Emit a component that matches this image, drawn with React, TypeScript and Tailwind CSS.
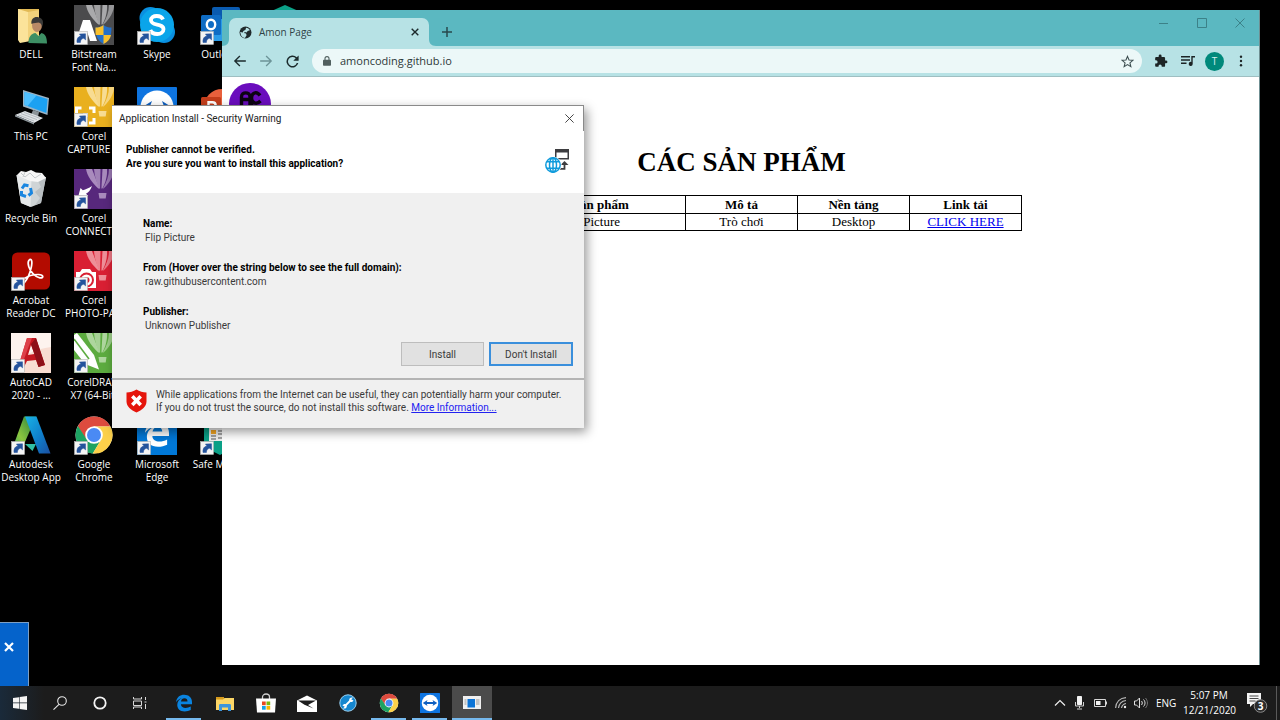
import type { ReactNode } from "react";

function ShortcutArrow() {
  return (
    <g>
      <rect x="0.5" y="26.5" width="13" height="13" fill="#f4f4f4" stroke="#b5b5b5" strokeWidth="0.6" />
      <path d="M3 37.5c-.4-3.6 1-6.3 4-6.6l-1.6-1.8 6.1-.3.1 6.1-1.8-1.6c-2.6.4-3.3 1.9-3.4 4.2z" fill="#24539c" stroke="#24539c" strokeWidth=".5" />
    </g>
  );
}

function Glyph({ children, shortcut = true }: { children: ReactNode; shortcut?: boolean }) {
  return (
    <svg viewBox="0 0 40 40" className="size-10 shrink-0" aria-hidden="true">
      {children}
      {shortcut && <ShortcutArrow />}
    </svg>
  );
}

function Balloon({ tint }: { tint: string }) {
  return (
    <g fill={tint}>
      <path d="M12 0h6l7.5 19.500h-1.200C18.500 14 13.500 8 12 0z" />
      <path d="M20 0h6.500l-.4 19.500h-.9C22.500 14 20.500 7 20 0z" opacity=".9" />
      <path d="M28.500 0H33c.5 7-1.500 14-4.600 19.500h-1z" />
      <path d="M35 0h5v2c-1.500 8-6 13.500-10.500 17.500h-.7C32.500 13 35 7 35 0z" opacity=".8" />
      <path d="M24.500 24h8l-.8 5.500h-6.300z" />
    </g>
  );
}

function FolderUser() {
  return (
    <Glyph shortcut={false}>
      <path d="M7 4h21v30l-20 3z" fill="#e2ba55" />
      <path d="M7 4l10 3v29.500L9 38 7 35z" fill="#fbe39a" />
      <path d="M17 7l11-2v29l-11 2.500z" fill="#f2d27c" />
      <path d="M17.500 38c0-6 2.500-9.500 7-10l3 3 3-3c3.500.8 5.500 4 5.500 10.500z" fill="#3d8f64" />
      <ellipse cx="26" cy="20" rx="5" ry="7" fill="#b98a66" />
      <path d="M20.500 19c-1-6 4-8 7.500-6.500 4 .8 5 5 3 9.500-.5-3-1.500-4-3.500-4.500-2 .4-4.500.2-7 1.500z" fill="#3b3a38" />
    </Glyph>
  );
}

function Computer() {
  return (
    <Glyph shortcut={false}>
      <path d="M12 3l26 8-1.500 17L12 19.500z" fill="#9bb3c4" />
      <path d="M13.500 5l23 7-1.200 14L13.500 18z" fill="#1ba1f2" />
      <path d="M13.500 5l12 3.600-9 10.500-3-1z" fill="#4fc0ff" />
      <path d="M22 23l6 2-1 5-7-2z" fill="#8c9499" />
      <path d="M4 28l10-4 18 7-9 5z" fill="#dfe3e6" />
      <path d="M4 28l19 8v1.500L4 29.500z" fill="#8e979d" />
      <path d="M7 27.800l16 6.200M10 26.600l16 6M13 25.400l16 6" stroke="#a3abb0" strokeWidth=".7" />
    </Glyph>
  );
}

function Bin() {
  return (
    <Glyph shortcut={false}>
      <path d="M5.500 6L35 8l-5 26-10 4-10-4z" fill="#cfd4d6" />
      <path d="M5.500 6l15 4-1 28-9.500-4z" fill="#e6e9ea" />
      <path d="M35 8l-8 4 3 6-6 5 5 6-5 7 6-2z" fill="#b9bfc2" />
      <path d="M6 6l4-4 5 1 5-2 5 2.500 6 .5 4 5-8 4-8-1z" fill="#f6f6f6" />
      <path d="M10 4l4 4 5-4 5 5 6-4M14 3l-2 5" stroke="#c4c9cb" fill="none" />
      <g fill="none" stroke="#1a86e0" strokeWidth="3">
        <path d="M11 19.500l2.500-3.500 4 .8" />
        <path d="M19.500 19l1 5-3 2.500" />
        <path d="M15 27.500l-4.500-1.500V22" />
      </g>
    </Glyph>
  );
}

function Acrobat() {
  return (
    <Glyph>
      <rect x="1" y="1.500" width="38" height="37" rx="5.500" fill="#b30b00" />
      <path d="M17.800 9.500c2.600-3 4 .5 2.300 7.500-1.500 6.500-4.500 12-6.600 14.500-3 2.500-4.500-1-.5-3.800 4-2.700 9.500-4.300 14.500-4.200 5.500.3 5.500 4 1.300 3.300-4.500-.8-9.500-6-11-11-.9-3-.9-5 0-6.300z" fill="none" stroke="#fff" strokeWidth="1.700" />
    </Glyph>
  );
}

function Autocad() {
  return (
    <Glyph>
      <rect width="40" height="40" fill="#f8ddd2" />
      <path d="M0 0h40v14C24 16 12 22 0 34z" fill="#fdf3ee" />
      <path fillRule="evenodd" d="M16 5h9l9 27-6.500 2-2.500-7-9 1-3.500 7H7zM20 12l-3 10 6.500-1z" fill="#c4171f" />
      <path d="M25 5l9 27-6.500 2L20 11z" fill="#8d1018" />
      <path d="M16 5h5L10 34H7z" fill="#dd4048" />
    </Glyph>
  );
}

function Autodesk() {
  return (
    <Glyph>
      <defs>
        <linearGradient id="adskLeft" x1="1" x2="0" y1="0" y2="1">
          <stop stopColor="#1f7a3c" />
          <stop offset=".6" stopColor="#8cc63f" />
          <stop offset="1" stopColor="#27a06a" />
        </linearGradient>
        <linearGradient id="adskRight" x1="0" x2="1" y1="0" y2="1">
          <stop stopColor="#19b3e6" />
          <stop offset=".55" stopColor="#0f7fcb" />
          <stop offset="1" stopColor="#1b4fa0" />
        </linearGradient>
      </defs>
      <path d="M13 1.500h12L9 38.500H1v-4z" fill="url(#adskLeft)" />
      <path d="M14 29l11 0-3.500 7z" fill="#2fbfa4" />
      <path d="M14 1.500h11.500L39.500 38.500H28z" fill="url(#adskRight)" />
    </Glyph>
  );
}

function Bitstream() {
  return (
    <Glyph>
      <rect width="40" height="40" fill="#4b4b4d" />
      <path d="M9 15h7l7 21h-7l-2.500-8H10l-4 8H2z" fill="#fff" />
      <Balloon tint="#a9a9ab" />
      <path d="M29.500 20c2.500 2 5 2.500 8 2.500 0 8-2 13-8 16.500-6-3.500-8-8.500-8-16.500 3 0 5.500-.5 8-2.500z" fill="#2470c9" />
      <path d="M29.500 20v10h-7.800c-.2-2-.2-5-.2-7.500 3 0 5.500-.5 8-2.500zM29.500 30h7.600c-.9 4-3.300 7-7.600 9z" fill="#f9c02c" />
    </Glyph>
  );
}

function Capture() {
  return (
    <Glyph>
      <rect width="40" height="40" fill="#e9b01f" />
      <Balloon tint="#f7dc93" />
      <path d="M2.500 26v-5h5M15 21h5v5M20 31v5h-5" stroke="#fff" strokeWidth="3" fill="none" />
      <rect x="9" y="26" width="5" height="4" fill="#fff" />
    </Glyph>
  );
}

function Connect() {
  return (
    <Glyph>
      <rect width="40" height="40" fill="#57287c" />
      <Balloon tint="#a98bbd" />
      <path d="M4.500 26.500l2-7.500 2.300 2.200c3.200-.8 6-2.200 9.200-4.200-1.500 4-3.500 6.500-6 7.700l2.300 2.300z" fill="#fff" />
    </Glyph>
  );
}

function PhotoPaint() {
  return (
    <Glyph>
      <rect width="40" height="40" fill="#d91f33" />
      <Balloon tint="#ee8f98" />
      <path d="M2 21h4l2-3h8l2 3h4v16H2z" fill="#fff" />
      <circle cx="12.500" cy="29" r="6.500" fill="none" stroke="#d91f33" strokeWidth="2" />
      <circle cx="12.500" cy="29" r="3" fill="#d91f33" />
    </Glyph>
  );
}

function CorelDraw() {
  return (
    <Glyph>
      <rect width="40" height="40" fill="#5cab3f" />
      <Balloon tint="#aed69e" />
      <path d="M0 2l3-2 17 22 5 14.500L11 31 0 17z" fill="#fff" />
      <path d="M0 6l15 20" stroke="#5cab3f" strokeWidth="1.600" />
    </Glyph>
  );
}

function ChromeMark() {
  return (
    <g>
      <circle cx="20" cy="20" r="18.500" fill="#fff" />
      <path d="M20 11.500h16.400A18.500 18.500 0 0 0 3.600 11.500L12.200 24.500z" fill="#dd4b3e" />
      <path d="M3.900 11A18.500 18.500 0 0 0 18.800 38.500l8.300-13.800-14.500-.5z" fill="#1da362" />
      <path d="M20 11.500h16.400A18.500 18.500 0 0 1 18.800 38.500l8.500-14.200z" fill="#fcd04a" />
      <circle cx="20" cy="20" r="8.800" fill="#fff" />
      <circle cx="20" cy="20" r="7" fill="#4a8af4" />
    </g>
  );
}

function TeamViewerMark() {
  return (
    <g>
      <rect width="40" height="40" rx="1" fill="#0e74e0" />
      <circle cx="20" cy="20" r="16.500" fill="#fff" />
      <path d="M5.500 20l9.500-6-1.500 4h13L25 14l9.500 6-9.500 6 1.500-4h-13l1.500 4z" fill="#0e5fc0" />
    </g>
  );
}

function EdgeMark({ color }: { color: string }) {
  return (
    <path
      fill={color}
      d="M4 18.300C5.200 8.500 12 3.500 20.500 3.500c8.700 0 15.500 5.500 15.500 15v4.200H13.800c.2 5.300 4.700 7.300 9.200 7.300 4 0 7-.9 10.500-2.800v7c-3.500 1.700-7.500 2.800-12.200 2.800C12 37 6.500 31.500 6.500 24c0-6.500 3.700-11.300 9.300-13.500C10.500 11.500 6.700 14.300 4 18.300zM14 16.800h13c0-3.800-2.300-6.100-6-6.100-3.800 0-6.300 2.400-7 6.100z"
    />
  );
}

function Skype() {
  return (
    <Glyph>
      <circle cx="13.500" cy="13" r="11" fill="#0a8fe0" />
      <circle cx="27" cy="27" r="11" fill="#0a8fe0" />
      <circle cx="20" cy="20" r="17" fill="#0aa5ea" />
      <path d="M26 14.500c-1-2.500-3.500-3.500-6.300-3.500-3.200 0-5.700 1.600-5.700 4.300 0 6.200 12.500 2.500 12.500 9 0 3-2.800 4.700-6.200 4.700-3.300 0-6-1.200-7-4" stroke="#fff" strokeWidth="3.800" fill="none" />
    </Glyph>
  );
}

function Outlook() {
  return (
    <Glyph>
      <rect x="12" y="2" width="28" height="34" rx="2" fill="#0a5bb0" />
      <rect x="12" y="14" width="28" height="22" fill="#2a9be8" />
      <rect x="1" y="10" width="20" height="20" rx="1.500" fill="#0f6cc4" />
      <ellipse cx="11" cy="19.500" rx="4.200" ry="4.800" fill="none" stroke="#fff" strokeWidth="2.400" />
    </Glyph>
  );
}

function PowerPoint() {
  return (
    <Glyph>
      <circle cx="22" cy="20" r="18" fill="#e8603c" />
      <rect x="1" y="10" width="20" height="20" rx="1.500" fill="#c43e1c" />
      <path d="M8.500 26V15.300h3.800c4.500 0 4.500 6.200 0 6.200H8.500" fill="none" stroke="#fff" strokeWidth="2.400" />
    </Glyph>
  );
}

function SafeMoney() {
  return (
    <Glyph>
      <path d="M20 0l18 8v22L20 40 4 32V8z" fill="#0ba087" />
      <rect x="9" y="6" width="26" height="20" fill="#eee" />
      <rect x="11" y="15" width="5" height="4" fill="#f5a623" />
      <path d="M11 21h5M18 16h8M18 19h8M11 24h5M18 23h8" stroke="#555" strokeWidth="1.200" />
    </Glyph>
  );
}

type Shortcut = { lines: string[]; icon: ReactNode } | null;

const shortcutColumns: Shortcut[][] = [
  [
    { lines: ["DELL"], icon: <FolderUser /> },
    { lines: ["This PC"], icon: <Computer /> },
    { lines: ["Recycle Bin"], icon: <Bin /> },
    { lines: ["Acrobat", "Reader DC"], icon: <Acrobat /> },
    { lines: ["AutoCAD", "2020 - ..."], icon: <Autocad /> },
    { lines: ["Autodesk", "Desktop App"], icon: <Autodesk /> },
  ],
  [
    { lines: ["Bitstream", "Font Na..."], icon: <Bitstream /> },
    { lines: ["Corel", "CAPTURE ..."], icon: <Capture /> },
    { lines: ["Corel", "CONNECT ..."], icon: <Connect /> },
    { lines: ["Corel", "PHOTO-PA..."], icon: <PhotoPaint /> },
    { lines: ["CorelDRAW", "X7 (64-Bit)"], icon: <CorelDraw /> },
    { lines: ["Google", "Chrome"], icon: <Glyph><ChromeMark /></Glyph> },
  ],
  [
    { lines: ["Skype"], icon: <Skype /> },
    { lines: ["TeamViewer"], icon: <Glyph><TeamViewerMark /></Glyph> },
    null,
    null,
    null,
    {
      lines: ["Microsoft", "Edge"],
      icon: (
        <Glyph>
          <rect width="40" height="40" fill="#0078d7" />
          <g transform="translate(5 4) scale(.75)"><EdgeMark color="#fff" /></g>
        </Glyph>
      ),
    },
  ],
  [
    { lines: ["Outlook"], icon: <Outlook /> },
    { lines: ["PowerPoint"], icon: <PowerPoint /> },
    null,
    null,
    null,
    { lines: ["Safe Money"], icon: <SafeMoney /> },
  ],
  [{ lines: [], icon: <Glyph><path d="M22 0l18 8v20L22 40 4 32V8z" fill="#0ba087" /></Glyph> }],
];

function DesktopIcons() {
  return (
    <div className="flex gap-px text-[10px] leading-[13px] text-white">
      {shortcutColumns.map((column, c) => (
        <ul key={c} className="w-[62px] shrink-0">
          {column.map((item, r) => (
            <li key={r} className="flex h-[82px] flex-col items-center gap-[3px] pt-[5px] text-center whitespace-nowrap">
              {item?.icon}
              <span className="flex flex-col items-center">
                {item?.lines.map((line) => <span key={line}>{line}</span>)}
              </span>
            </li>
          ))}
        </ul>
      ))}
    </div>
  );
}

function TabStrip() {
  return (
    <header className="flex h-9 items-start justify-between bg-[#5bb8c1]">
      <div className="flex items-end self-end">
        <svg viewBox="0 0 7 7" className="size-[7px]" aria-hidden="true">
          <path d="M0 7h7V0c0 4-2 7-7 7z" fill="#b7e2e5" />
        </svg>
        <div className="flex h-7 w-[200px] items-center rounded-t-[7px] bg-[#b7e2e5] pr-2 pl-[10px]">
          <svg viewBox="0 0 24 24" className="size-[13px]" aria-hidden="true">
            <circle cx="12" cy="12" r="11" fill="#202a2c" />
            <path d="M13 3c3 0 6 2 7 5l-4 1-2 3-3-1-2 2 4 1 1 3-3 5c-5 0-8-4-8-8l-1-3 5 1 1-3 4-2z" fill="#b7e2e5" />
          </svg>
          <span className="ml-[7px] flex-1 text-[10px] text-[#2f4346]">Amon Page</span>
          <button aria-label="Close tab" className="flex size-3 items-center justify-center">
            <svg viewBox="0 0 8 8" className="size-2" stroke="#1d2a2c" strokeWidth="1.400">
              <path d="M.7.7l6.600 6.600M7.300.7L.7 7.300" />
            </svg>
          </button>
        </div>
        <svg viewBox="0 0 7 7" className="size-[7px]" aria-hidden="true">
          <path d="M7 7H0V0c0 4 2 7 7 7z" fill="#b7e2e5" />
        </svg>
        <button aria-label="New tab" className="mb-[7px] ml-1 flex size-[14px] items-center justify-center">
          <svg viewBox="0 0 10 10" className="size-[10px]" stroke="#29484c" strokeWidth="1.500">
            <path d="M5 0v10M0 5h10" />
          </svg>
        </button>
      </div>
      <div className="flex h-[26px] items-center gap-7 pr-[14px]">
        <button aria-label="Minimize">
          <svg viewBox="0 0 10 10" className="block size-[10px]" stroke="#3c8188"><path d="M0 5.500h9" /></svg>
        </button>
        <button aria-label="Maximize">
          <svg viewBox="0 0 10 10" className="block size-[10px]" stroke="#3c8188" fill="none"><path d="M.5.500h9v9h-9z" /></svg>
        </button>
        <button aria-label="Close">
          <svg viewBox="0 0 10 10" className="block size-[10px]" stroke="#3c8188"><path d="M.5.500l9 9M9.500.500l-9 9" /></svg>
        </button>
      </div>
    </header>
  );
}

function Toolbar() {
  return (
    <nav className="flex h-[31px] items-center border-b border-[#9fbfc2] bg-[#b7e2e5] pr-4 pl-[11px]">
      <div className="flex items-center gap-3">
        <button aria-label="Back">
          <svg viewBox="0 0 24 24" className="block size-[14px]" fill="#1c2b2d"><path d="M22 10.800H6.100l6.500-6.500L11 2.500 1.500 12l9.500 9.500 1.600-1.700-6.500-6.600H22z" /></svg>
        </button>
        <button aria-label="Forward">
          <svg viewBox="0 0 24 24" className="block size-[14px]" fill="#6d9498"><path d="M2 10.900h15.900l-6.500-6.600L13 2.500 22.500 12 13 21.500l-1.600-1.700 6.500-6.600H2z" /></svg>
        </button>
        <button aria-label="Reload">
          <svg viewBox="0 0 24 24" className="block size-[15px]" fill="#1c2b2d"><path d="M18.800 5.200A9.600 9.600 0 1 0 21.300 14.500h-2.500a7.200 7.200 0 1 1-1.700-7.600L13.300 10.700H21.800V2.200z" /></svg>
        </button>
      </div>
      <div className="ml-3 flex h-6 flex-1 items-center rounded-full bg-[#ecf8f8] pr-2 pl-[11px]">
        <svg viewBox="0 0 8 10" className="h-[10px] w-2" aria-hidden="true">
          <rect x="0" y="3.800" width="8" height="6" rx=".8" fill="#51605f" />
          <path d="M2 4V2.600a2 2 0 0 1 4 0V4" stroke="#51605f" fill="none" strokeWidth="1.100" />
        </svg>
        <input aria-label="Address" defaultValue="amoncoding.github.io" className="ml-[9px] min-w-0 flex-1 bg-transparent text-[11px] text-[#2e3838] outline-none" />
        <button aria-label="Bookmark this page">
          <svg viewBox="0 0 24 24" className="block size-[13px]" fill="none" stroke="#3d4e50" strokeWidth="2"><path d="M12 2.500l2.800 6.700 7.200.6-5.500 4.700 1.700 7L12 17.700l-6.200 3.800 1.700-7L2 9.800l7.200-.6z" /></svg>
        </button>
      </div>
      <div className="ml-3 flex items-center">
        <button aria-label="Extensions">
          <svg viewBox="0 0 24 24" className="block size-[14px]" fill="#1d2526"><path d="M20.500 11H19V7a2 2 0 0 0-2-2h-4V3.500a2.500 2.500 0 0 0-5 0V5H4a2 2 0 0 0-2 2v3.800h1.500a2.700 2.700 0 0 1 0 5.400H2V20c0 1.100.9 2 2 2h3.800v-1.500a2.700 2.700 0 0 1 5.400 0V22H17a2 2 0 0 0 2-2v-4h1.500a2.500 2.500 0 0 0 0-5z" /></svg>
        </button>
        <button aria-label="Media controls" className="ml-[13px]">
          <svg viewBox="0 0 14 12" className="block h-3 w-[14px]" fill="#1d2526">
            <path d="M0 1h9v1.400H0zM0 4.300h9v1.400H0zM0 7.600h5.500V9H0zM10.300 1H14v1.500h-2.300V9a2 2 0 1 1-1.400-2z" />
          </svg>
        </button>
        <button aria-label="Account" className="ml-[10px] size-[19px] rounded-full bg-[#00897b] text-[10px] leading-[19px] text-[#d6efec]">T</button>
        <button aria-label="Menu" className="ml-[15px]">
          <svg viewBox="0 0 4 12" className="block h-3 w-1" fill="#1d2526"><circle cx="2" cy="1.800" r="1.200" /><circle cx="2" cy="6" r="1.200" /><circle cx="2" cy="10.200" r="1.200" /></svg>
        </button>
      </div>
    </nav>
  );
}

function ProductPage() {
  return (
    <main className="flex-1 bg-white pt-[6px] pr-[5px] pl-[7px] font-['Liberation_Serif',serif] text-black">
      <svg viewBox="0 0 42 42" className="block size-[42px]" aria-hidden="true">
        <circle cx="21" cy="21" r="21" fill="#6a0dbd" />
        <path d="M12.500 24V14c0-5.500 8.500-5.500 8.500 0v10M12.500 16.500H21M31 12.500c-3.500-5-8.500-2.500-8.500 2.500s5 7 9 3M22.500 18v7" fill="none" stroke="#0c0312" strokeWidth="3.400" />
      </svg>
      <h1 className="mt-[21px] text-center text-[27px] leading-8 font-bold">CÁC SẢN PHẨM</h1>
      <table className="mx-auto mt-[17px] w-[561px] table-fixed border-collapse text-center text-[13px] leading-[15px] [&_td]:border [&_td]:border-black [&_td]:px-px [&_td]:pb-px [&_th]:border [&_th]:border-black [&_th]:p-px">
        <colgroup>
          <col className="w-8" />
          <col className="w-48" />
          <col className="w-28" />
          <col className="w-28" />
          <col className="w-28" />
        </colgroup>
        <thead>
          <tr><th></th><th>Tên sản phẩm</th><th>Mô tả</th><th>Nền tảng</th><th>Link tải</th></tr>
        </thead>
        <tbody>
          <tr>
            <td></td>
            <td>Flip Picture</td>
            <td>Trò chơi</td>
            <td>Desktop</td>
            <td><a href="#download" className="text-[#0000ee] underline">CLICK HERE</a></td>
          </tr>
        </tbody>
      </table>
    </main>
  );
}

function Browser() {
  return (
    <section aria-label="Amon Page" className="absolute top-[10px] right-5 bottom-[21px] left-[222px] flex flex-col overflow-hidden border-r border-[#6f8f92]">
      <TabStrip />
      <Toolbar />
      <ProductPage />
    </section>
  );
}

const details = [
  { term: "Name:", value: "Flip Picture" },
  { term: "From (Hover over the string below to see the full domain):", value: "raw.githubusercontent.com" },
  { term: "Publisher:", value: "Unknown Publisher" },
];

function InstallDialog() {
  return (
    <section role="dialog" aria-labelledby="dialog-title" className="absolute top-[105px] left-28 w-[472px] border-t border-[#8a8a8a] bg-[#f0f0f0] font-[Roboto,sans-serif] text-[10px] text-[#3a3a3a] shadow-[3px_4px_10px_rgba(0,0,0,0.4)]">
      <header className="bg-white">
        <div className="flex h-[25px] items-center justify-between border-r border-[#8a8a8a] pr-[9px] pl-[7px]">
          <h2 id="dialog-title" className="text-[#222]">Application Install - Security Warning</h2>
          <button aria-label="Close">
            <svg viewBox="0 0 9 9" className="block size-[9px]" stroke="#333" strokeWidth=".9"><path d="M.4.400l8.200 8.200M8.600.400L.4 8.600" /></svg>
          </button>
        </div>
        <div className="flex h-[62px] items-start justify-between pt-3 pr-[15px] pl-[14px]">
          <p className="leading-[14px] font-bold text-black">
            Publisher cannot be verified.
            <br />
            Are you sure you want to install this application?
          </p>
          <svg viewBox="0 0 24 24" className="mt-[6px] size-6" aria-hidden="true">
            <path d="M10 0h14v10.500H10zM11.500 3.500V9h11V3.500z" fill="#3d3d40" fillRule="evenodd" />
            <path d="M13.500 19.800h6v-5.800" fill="none" stroke="#3d3d40" strokeWidth="1.800" />
            <path d="M15.500 16l4-4 4 4z" fill="#3d3d40" />
            <circle cx="8" cy="16" r="8.600" fill="#fff" />
            <g fill="none" stroke="#0f9bdc" strokeWidth="1.500">
              <circle cx="8" cy="16" r="7.200" />
              <ellipse cx="8" cy="16" rx="3.500" ry="7.200" />
              <path d="M8 9v14M2 12.800h12M2 19.200h12" />
            </g>
          </svg>
        </div>
      </header>
      <div className="border-b-2 border-[#b4b4b4] px-[11px] pt-6 pb-3">
        <dl className="flex flex-col gap-4 pl-5 leading-[14px]">
          {details.map(({ term, value }) => (
            <div key={term}>
              <dt className="font-bold text-black">{term}</dt>
              <dd className="pl-[2px]">{value}</dd>
            </div>
          ))}
        </dl>
        <div className="mt-[9px] flex justify-end gap-[5px]">
          <button className="h-6 w-[83px] border border-[#bdbdbd] bg-[#e1e1e1]">Install</button>
          <button className="h-6 w-[84px] border-2 border-[#3a8fdc] bg-[#e1e1e1]">Don't Install</button>
        </div>
      </div>
      <footer className="flex items-start gap-[9px] px-[14px] pt-2 pb-[14px]">
        <svg viewBox="0 0 21 24" className="mt-[1px] h-6 w-[21px] shrink-0" aria-hidden="true">
          <path d="M10.500.5C13.500 2.500 17 3.300 20.500 3.500v9c0 5-4.500 8.500-10 11-5.500-2.500-10-6-10-11v-9c3.500-.2 7-1 10-3z" fill="#e5150c" />
          <path d="M6.300 7.300l8.400 8.600M14.700 7.300l-8.400 8.600" stroke="#fff" strokeWidth="3.600" />
        </svg>
        <p className="leading-[13px] whitespace-nowrap">
          While applications from the Internet can be useful, they can potentially harm your computer.
          <br />
          If you do not trust the source, do not install this software.{" "}
          <a href="#more" className="text-[#2222f0] underline">More Information...</a>
        </p>
      </footer>
    </section>
  );
}

const pinned: { name: string; icon: ReactNode; open?: boolean }[] = [
  {
    name: "Microsoft Edge",
    open: true,
    icon: <svg viewBox="2 2 36 36" className="size-[18px]"><EdgeMark color="#0a84e0" /></svg>,
  },
  {
    name: "File Explorer",
    icon: (
      <svg viewBox="0 0 18 15" className="h-[15px] w-[18px]">
        <path d="M0 1h8v4H0z" fill="#d69a1c" />
        <path d="M0 3.500h7L8.500 2H18v12H0z" fill="#fbd667" />
        <path d="M3 15V9.500C3 8.500 3.500 8 4.500 8h9c1 0 1.500.5 1.500 1.500V15h-3v-3.500H6V15z" fill="#3d95dc" />
      </svg>
    ),
  },
  {
    name: "Store",
    icon: (
      <svg viewBox="0 0 20 20" className="size-5">
        <path d="M6.500 6V4a3.500 3 0 0 1 7 0v2" fill="none" stroke="#cfcfcf" strokeWidth="1.300" />
        <path d="M0 5.500h20L19 19.500H1z" fill="#fff" />
        <path d="M6 8.500h3.700v3.700H6z" fill="#e8471e" />
        <path d="M10.500 8.500h3.700v3.700h-3.700z" fill="#7cb80b" />
        <path d="M6 13h3.700v3.700H6z" fill="#12a0e8" />
        <path d="M10.500 13h3.700v3.700h-3.700z" fill="#f9b700" />
      </svg>
    ),
  },
  {
    name: "Mail",
    icon: (
      <svg viewBox="0 0 20 17" className="h-[17px] w-5">
        <path d="M0 5.500L10 .5l10 5V17H0z" fill="#fff" />
        <path d="M1 5.500h18l-8 4.500 5.500 3.500L7.500 9.800z" fill="#1c1c1c" />
      </svg>
    ),
  },
  {
    name: "Support Tool",
    icon: (
      <svg viewBox="0 0 18 18" className="size-[18px]">
        <circle cx="9" cy="9" r="8.200" fill="#1687cf" stroke="#9ad0f0" />
        <path d="M6 12l6-6" stroke="#fff" strokeWidth="1.800" />
        <path d="M3.500 11.500c1.500-2.500 4-1.800 4.300.5.200 2-2 3.200-3.800 2.300l1.800-1.500zM14.500 6.500c-1.500 2.500-4 1.800-4.300-.5-.2-2 2-3.200 3.800-2.300l-1.800 1.500z" fill="#fff" />
      </svg>
    ),
  },
  { name: "Google Chrome", open: true, icon: <svg viewBox="0 0 40 40" className="size-5"><ChromeMark /></svg> },
  { name: "TeamViewer", open: true, icon: <svg viewBox="0 0 40 40" className="size-5"><TeamViewerMark /></svg> },
];

function Taskbar() {
  return (
    <footer className="z-10 flex h-[34px] shrink-0 items-stretch justify-between bg-[linear-gradient(90deg,#1a2a3a,#1c1c1c_44px)] text-[10px] text-white">
      <div className="flex">
        <button aria-label="Start" className="flex w-10 items-center justify-center">
          <svg viewBox="0 0 14 14" className="size-[14px]" fill="#f4f4f4"><path d="M0 2l6-.8v5.400H0zM6.600 1.100L14 0v6.600H6.600zM0 7.300h6v5.400L0 12zM6.600 7.300H14V14l-7.400-1.100z" /></svg>
        </button>
        <button aria-label="Search" className="flex w-10 items-center justify-center">
          <svg viewBox="0 0 14 14" className="size-[14px]" fill="none" stroke="#e8e8e8" strokeWidth="1.100"><circle cx="9" cy="5" r="4.300" /><path d="M6 8.300L.5 13.600" /></svg>
        </button>
        <button aria-label="Cortana" className="flex w-10 items-center justify-center">
          <svg viewBox="0 0 14 14" className="size-[14px]" fill="none" stroke="#f4f4f4" strokeWidth="1.800"><circle cx="7" cy="7" r="5.700" /></svg>
        </button>
        <button aria-label="Task view" className="flex w-10 items-center justify-center">
          <svg viewBox="0 0 14 12" className="h-3 w-[14px]" fill="none" stroke="#d8d8d8"><path d="M.5 0v2h8V0M.5 12v-2h8v2M.5 4v4.500h8V4zM12.500 0v3M12.500 7v5M11.500 5h2" /></svg>
        </button>
        <div className="ml-[3px] flex">
          {pinned.map(({ name, icon, open }) => (
            <button
              key={name}
              aria-label={name}
              className={
                open
                  ? "relative flex w-[41px] items-center justify-center after:absolute after:inset-x-[3px] after:bottom-0 after:h-0.5 after:bg-[#76b9ed]"
                  : "flex w-[41px] items-center justify-center"
              }
            >
              {icon}
            </button>
          ))}
        </div>
        <button aria-label="Application Install" className="relative ml-[2px] flex w-10 items-center justify-center bg-[#4b4b4b] after:absolute after:inset-x-0 after:bottom-0 after:h-0.5 after:bg-[#76b9ed]">
          <svg viewBox="0 0 18 14" className="h-[14px] w-[18px]">
            <path d="M0 0h18v13H0z" fill="#f0f0f0" />
            <path d="M1.500 4h2M1.500 6h2M1.500 8h2M13 4h3.500M13 6h3.500M13 8h3.500" stroke="#999" />
            <rect x="4.500" y="3" width="7.500" height="8.500" fill="#0c74d6" />
          </svg>
        </button>
      </div>
      <div className="flex items-center">
        <svg viewBox="0 0 12 8" className="h-2 w-3" fill="none" stroke="#f0f0f0" strokeWidth="1.200"><path d="M1 6.500l5-5 5 5" /></svg>
        <svg viewBox="0 0 9 14" className="ml-[9px] h-[14px] w-[9px]" aria-hidden="true">
          <rect x="2" y="0" width="5" height="9" rx=".8" fill="#f2f2f2" />
          <path d="M.5 6v4h8V6M4.500 10v2M2 13h5" stroke="#d0d0d0" fill="none" />
        </svg>
        <svg viewBox="0 0 13 8" className="ml-[10px] h-2 w-[13px]" aria-hidden="true">
          <path d="M.5.500h11v7H.5zM12.500 2.500v3" fill="none" stroke="#d8d8d8" />
          <path d="M2 2h4.500v4H2z" fill="#f2f2f2" />
        </svg>
        <svg viewBox="0 0 12 12" className="ml-2 size-3" fill="none" stroke="#b8b8b8" strokeWidth="1.200">
          <path d="M.6 11C1 5 5 1 11 .6M3.500 11C4 7 7 4 11 3.500M6.500 11C7 8.500 8.500 7 11 6.500" />
          <circle cx="10" cy="10" r="1.200" fill="#eee" stroke="none" />
        </svg>
        <svg viewBox="0 0 14 12" className="ml-[7px] h-3 w-[14px]" fill="none" stroke="#e0e0e0">
          <path d="M.5 4h2l3-3v10l-3-3h-2zM7.500 4c1 1.200 1 2.800 0 4M9.500 2.500c2 2 2 5 0 7" />
          <path d="M11.500 1c2.600 3 2.600 7 0 10" stroke="#777" />
        </svg>
        <span className="ml-2 w-5 text-center">ENG</span>
        <time className="ml-[7px] w-[52px] text-center leading-[15px] whitespace-nowrap">
          5:07 PM
          <br />
          12/21/2020
        </time>
        <button aria-label="3 notifications" className="ml-3 text-white">
          <svg viewBox="0 0 21 20" className="block h-5 w-[21px]">
            <path d="M0 0h14v11H6l-3 3v-3H0z" fill="#f4f4f4" />
            <path d="M2.500 3h9M2.500 5.500h9M2.500 8h6" stroke="#333" strokeWidth=".9" />
            <circle cx="13.500" cy="13" r="6.300" fill="#2c2c2c" stroke="#8a8a8a" />
            <text x="13.500" y="16.500" textAnchor="middle" fontSize="10" fontWeight="700" fill="#fff">3</text>
          </svg>
        </button>
        <button aria-label="Show desktop" className="ml-2 h-[34px] w-1 border-l border-[#5a5a5a]" />
      </div>
    </footer>
  );
}

export default function App() {
  return (
    <div className="flex h-screen flex-col overflow-hidden bg-black font-['Open_Sans','Noto_Sans',sans-serif]">
      <div className="relative min-h-0 flex-1">
        <DesktopIcons />
        <Browser />
        <InstallDialog />
        <aside className="absolute bottom-0 left-0 flex h-16 w-[29px] items-start border-t border-r border-[#7d9fc4] bg-[#0563cb] pt-[19px] pl-1">
          <button aria-label="Dismiss">
            <svg viewBox="0 0 10 10" className="block size-[10px]" stroke="#fff" strokeWidth="2.200"><path d="M1 1l8 8M9 1L1 9" /></svg>
          </button>
        </aside>
      </div>
      <Taskbar />
    </div>
  );
}
